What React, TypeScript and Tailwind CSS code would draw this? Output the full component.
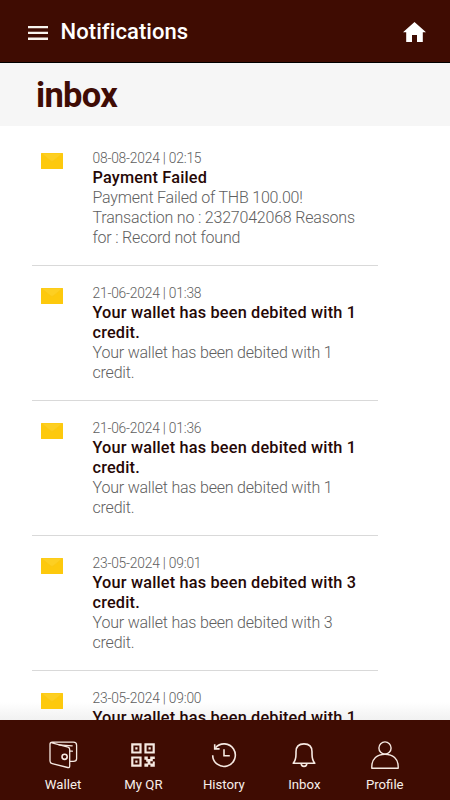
import React from 'react';

type Message = { date: string; title: string[]; body: string[] };

const debit = (date: string, n: number): Message => ({
  date,
  title: [`Your wallet has been debited with ${n}`, 'credit.'],
  body: [`Your wallet has been debited with ${n}`, 'credit.'],
});

const messages: Message[] = [
  {
    date: '08-08-2024 | 02:15',
    title: ['Payment Failed'],
    body: ['Payment Failed of THB 100.00!', 'Transaction no : 2327042068 Reasons', 'for : Record not found'],
  },
  debit('21-06-2024 | 01:38', 1),
  debit('21-06-2024 | 01:36', 1),
  debit('23-05-2024 | 09:01', 3),
  debit('23-05-2024 | 09:00', 1),
];

function Envelope() {
  return (
    <svg width="22" height="16" viewBox="0 0 22 16" className="block">
      <rect width="22" height="16" rx="0.5" fill="#fdc90d" />
      <path d="M1 0.5H21L12.5 7.5Q11 8.7 9.5 7.5Z" fill="#fdcf22" />
      <path d="M0.5 0.5L9.5 7.8Q11 9 12.5 7.8L21.5 0.5" fill="none" stroke="#fac71a" strokeWidth="0.6" />
    </svg>
  );
}

function Row({ m }: { m: Message }) {
  return (
    <li className="flex h-[135px] shrink-0 border-b border-[#d9d9d9] pt-[17px]">
      <div className="w-[60.5px] shrink-0 pl-[8.5px] pt-[5px]">
        <Envelope />
      </div>
      <div className="whitespace-nowrap leading-5">
        <p className="text-[13.8px] font-light leading-5 tracking-[-0.2px] text-[#606060]">{m.date}</p>
        {m.title.map((t) => (
          <p key={t} className="text-[16.3px] font-medium leading-5 tracking-[0.18px] text-[#260806]">{t}</p>
        ))}
        {m.body.map((t) => (
          <p key={t} className="text-[16px] font-light leading-5 tracking-[-0.2px] text-[#606060]">{t}</p>
        ))}
      </div>
    </li>
  );
}

function WalletIcon() {
  return (
    <svg width="30" height="30" viewBox="0 0 30 30" fill="none" stroke="#f6e9e2" strokeWidth="1.3" strokeLinejoin="round" strokeLinecap="round">
      <path d="M4 2.9L20 7.1Q21.7 7.7 21.7 9.4V26Q21.7 28 19.7 27.5L4.2 23.6Q2 23 2 21V4.4Q2 2.2 4.2 2.2H25.4Q28.6 2.2 28.6 5.2V18.8Q28.6 21.4 25.4 21.4H22" />
      <path d="M11 4.9L24.2 5.8M21.7 11.2H24.4" />
      <circle cx="16.6" cy="16.8" r="2.6" strokeWidth="1.6" />
    </svg>
  );
}

function QrIcon() {
  return (
    <svg width="30" height="30" viewBox="0 0 30 30" fill="none" stroke="#f6e9e2" strokeWidth="2.2">
      <path d="M4.3 4.3h8.2v8.2H4.3zM17.5 4.3h8.2v8.2h-8.2zM4.3 17.5h8.2v8.2H4.3z" />
      <path d="M7.3 7.3h2.2v2.2H7.3zM20.5 7.3h2.2v2.2h-2.2zM7.3 20.5h2.2v2.2H7.3z" fill="#f6e9e2" stroke="none" />
      <path d="M16.4 16.4h3.4v2.6h2.4v-2.6h4.6v2.7h-2v2.2h-2.4v2.2h2.4v-2h2v5.3h-4.4v-2h-2.2v2h-3.8v-3.3h3.2v-1.8h-1.4v-2h-1.8z" fill="#f6e9e2" stroke="none" />
    </svg>
  );
}

function HistoryIcon() {
  return (
    <svg width="30" height="30" viewBox="0 0 30 30" fill="none" stroke="#f6e9e2" strokeWidth="1.6">
      <path d="M3.7 15.2A11.3 11.3 0 1 0 6.5 7.7" />
      <path d="M5.7 4.2V8.9H10.6" />
      <path d="M15 9.2V15.8H20.8" />
    </svg>
  );
}

function BellIcon() {
  return (
    <svg width="30" height="30" viewBox="0 0 30 30" fill="none" stroke="#f6e9e2" strokeWidth="1.6" strokeLinejoin="round">
      <path d="M4.2 23.2Q7 20 7 14V11.8Q7 3.9 15 3.9T23 11.8V14Q23 20 25.8 23.2Z" />
      <path d="M12.2 23.6A2.8 2.8 0 0 0 17.8 23.6" />
    </svg>
  );
}

function ProfileIcon() {
  return (
    <svg width="30" height="30" viewBox="0 0 30 30" fill="none" stroke="#f6e9e2" strokeWidth="1.4" strokeLinejoin="round">
      <circle cx="15" cy="8" r="6.1" />
      <path d="M1.8 28.2V26.6C1.8 19 7 14.2 15 14.2S28.2 19 28.2 26.6V28.2Z" />
    </svg>
  );
}

const tabs = [
  { label: 'Wallet', icon: <WalletIcon /> },
  { label: 'My QR', icon: <QrIcon /> },
  { label: 'History', icon: <HistoryIcon /> },
  { label: 'Inbox', icon: <BellIcon /> },
  { label: 'Profile', icon: <ProfileIcon /> },
];

export default function App() {
  return (
    <div className="flex h-[800px] w-[450px] flex-col overflow-hidden bg-white font-[Roboto,sans-serif]">
      <header className="flex h-[63px] shrink-0 items-center border-b border-black bg-[#3f0c02] pl-7 pr-6 pt-[2px] text-white">
        <svg width="20" height="14" viewBox="0 0 20 14" fill="#f8f4ee" className="mt-px">
          <path d="M0 0h20v2.3H0zM0 5.8h20v2.3H0zM0 11.6h20v2.3H0z" />
        </svg>
        <h1 className="ml-[12.5px] text-[22px] font-medium leading-7 tracking-[0.08px]">Notifications</h1>
        <svg width="23" height="20" viewBox="0 0 23 20" className="ml-auto" fill="#fff">
          <path d="M11.5 0L23 10.3H19.8V20H14V13H9V20H3.2V10.3H0Z" />
        </svg>
      </header>
      <div className="flex h-[63px] shrink-0 items-center bg-[#f6f6f6] pl-9">
        <h2 className="text-[34.5px] font-bold leading-10 tracking-[-0.7px] text-[#3f0c05]">inbox</h2>
      </div>
      <ul className="flex min-h-0 flex-1 flex-col overflow-hidden bg-linear-to-b from-white from-97% to-[#f1f1f1] pl-8 pr-[72px] pt-[5px]">
        {messages.map((m) => (
          <Row key={m.date} m={m} />
        ))}
      </ul>
      <nav className="flex h-20 shrink-0 bg-[#3f0c02] pl-[22.8px] pr-[25px] text-[#f8efea]">
        {tabs.map((t) => (
          <div key={t.label} className="flex flex-1 flex-col items-center pt-5">
            {t.icon}
            <span className="mt-[5px] whitespace-nowrap text-[13.2px] leading-5">{t.label}</span>
          </div>
        ))}
      </nav>
    </div>
  );
}
